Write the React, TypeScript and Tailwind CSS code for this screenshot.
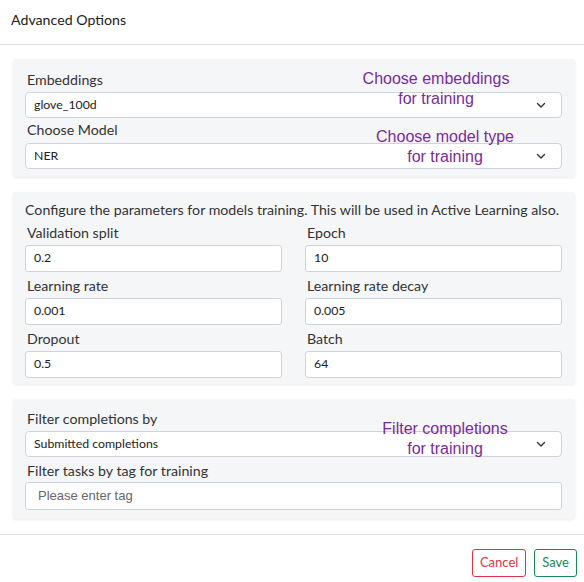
import React from 'react'

const lato = { fontFamily: 'Lato, "Open Sans", sans-serif' }

function Chevron() {
  return (
    <svg className="w-[10px] h-[10px] text-[#333]" viewBox="0 0 10 10" fill="none" stroke="currentColor">
      <path d="M1.5 3.5L5 7L8.5 3.5" strokeWidth={1.4} strokeLinecap="round" strokeLinejoin="round" />
    </svg>
  )
}

function Select({ value }: { value: string }) {
  return (
    <div className="h-[26px] w-full bg-white border border-[#cfd4da] rounded-[4px] flex items-center justify-between pl-[8px] pr-[15px] text-[12.3px] text-[#222]">
      <span>{value}</span>
      <Chevron />
    </div>
  )
}

function Field({ label, value }: { label: string; value: string }) {
  return (
    <div className="flex flex-col">
      <label className="pl-[2px] text-[14.2px] leading-[20px] text-[#333]">{label}</label>
      <div className="mt-[2px] h-[27px] bg-white border border-[#cfd4da] rounded-[3px] flex items-center pl-[8px] text-[12.3px] text-[#222]">
        {value}
      </div>
    </div>
  )
}

function Note({ lines, className }: { lines: string[]; className: string }) {
  return (
    <div
      className={`absolute text-center text-[16px] leading-[20px] text-[#7a2b98] pointer-events-none ${className}`}
      style={{ fontFamily: '"Liberation Sans", Arial, sans-serif' }}
    >
      {lines.map((l) => (
        <div key={l}>{l}</div>
      ))}
    </div>
  )
}

export default function App() {
  return (
    <div className="w-[584px] h-[582px] bg-white flex flex-col" style={lato}>
      <div className="shrink-0 h-[45px] border-b border-[#dee2e6] flex items-center pb-[4px] px-[11px] text-[14.2px] text-[#222]">
        Advanced Options
      </div>

      <div className="shrink-0 flex flex-col gap-[15px] pt-[14px] pl-[13px] pr-[9px]">
        {/* Embeddings / model */}
        <div className="relative bg-[#f5f6f8] rounded-[3px] shadow-[0_1px_3px_rgba(0,0,0,0.08)] pt-[11px] pb-[8px] pl-[12px] pr-[13px]">
          <label className="block pl-[2px] text-[14.2px] leading-[20px] text-[#333]">Embeddings</label>
          <div className="mt-[2px]">
            <Select value="glove_100d" />
          </div>
          <label className="block pl-[2px] text-[14.2px] leading-[20px] text-[#333] mt-[2px]">Choose Model</label>
          <div className="mt-[3px]">
            <Select value="NER" />
          </div>
          <Note lines={['Choose embeddings', 'for training']} className="left-[343px] top-[10px] w-[160px]" />
          <Note lines={['Choose model type', 'for training']} className="left-[352px] top-[68px] w-[160px]" />
        </div>

        {/* Parameters */}
        <div className="bg-[#f5f6f8] rounded-[3px] shadow-[0_1px_3px_rgba(0,0,0,0.08)] pt-[8px] pb-[6px] pl-[12px] pr-[13px]">
          <p className="whitespace-nowrap text-[14.2px] leading-[20px] text-[#333]">
            Configure the parameters for models training. This will be used in Active Learning also.
          </p>
          <div className="grid grid-cols-2 gap-x-[23px] gap-y-[4px] mt-[3px]">
            <Field label="Validation split" value="0.2" />
            <Field label="Epoch" value="10" />
            <Field label="Learning rate" value="0.001" />
            <Field label="Learning rate decay" value="0.005" />
            <Field label="Dropout" value="0.5" />
            <Field label="Batch" value="64" />
          </div>
        </div>

        {/* Filters */}
        <div className="relative bg-[#f5f6f8] rounded-[3px] shadow-[0_1px_3px_rgba(0,0,0,0.08)] pt-[10px] pb-[9px] pl-[12px] pr-[13px]">
          <label className="block pl-[2px] text-[14.2px] leading-[20px] text-[#333]">Filter completions by</label>
          <div className="mt-[2px]">
            <Select value="Submitted completions" />
          </div>
          <label className="block pl-[2px] text-[14.2px] leading-[20px] text-[#333] mt-[4px]">
            Filter tasks by tag for training
          </label>
          <div
            className="mt-[1px] h-[28px] bg-white border border-[#cfd4da] rounded-[3px] flex items-center pl-[12px] text-[13px] text-[#666]"
            style={{ fontFamily: '"Liberation Sans", Arial, sans-serif' }}
          >
            Please enter tag
          </div>
          <Note lines={['Filter completions', 'for training']} className="left-[352px] top-[20px] w-[160px]" />
        </div>
      </div>

      <div className="shrink-0 mt-[15px] border-t border-[#dee2e6] flex justify-end gap-[8px] pt-[14px] pr-[7px]">
        <button className="h-[28px] px-[7px] border border-[#dc3545] rounded-[3px] text-[13px] text-[#dc3545] bg-white">
          Cancel
        </button>
        <button className="h-[28px] px-[7px] border border-[#198754] rounded-[3px] text-[13px] text-[#198754] bg-white">
          Save
        </button>
      </div>
    </div>
  )
}
